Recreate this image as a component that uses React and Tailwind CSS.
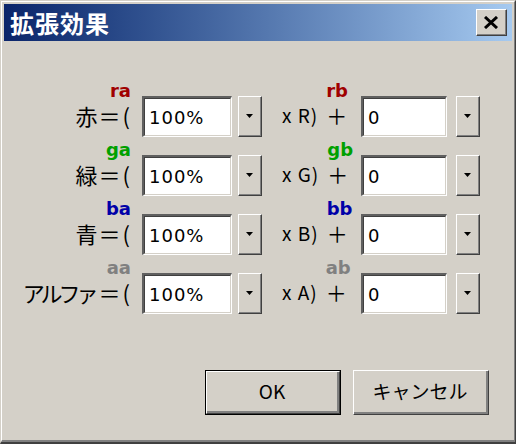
import React from "react";

const rows = [
  { label: "赤", a: "ra", b: "rb", ch: "R", color: "text-[#a00000]", narrow: false },
  { label: "緑", a: "ga", b: "gb", ch: "G", color: "text-[#00a000]", narrow: false },
  { label: "青", a: "ba", b: "bb", ch: "B", color: "text-[#0000a8]", narrow: false },
  { label: "アルファ", a: "aa", b: "ab", ch: "A", color: "text-[#808080]", narrow: true },
];

const Sunken = ({ w, value }) => (
  <div className={`${w} h-[41px] border-t-2 border-l-2 border-t-[#606060] border-l-[#606060] border-b border-r border-b-white border-r-white`}>
    <div className="h-full bg-white border-t border-l border-t-[#404040] border-l-[#404040] border-b border-r border-b-[#d4d0c8] border-r-[#d4d0c8] flex items-center pl-[4px] font-['DejaVu_Sans',sans-serif] text-[18px] tracking-[1px] text-black">
      {value}
    </div>
  </div>
);

const DropBtn = () => (
  <div className="w-[24px] h-[41px] border-t border-l border-t-white border-l-white border-b border-r border-b-[#404040] border-r-[#404040]">
    <div className="h-full border-b border-r border-b-[#808080] border-r-[#808080] bg-[#d4d0c8] flex items-center justify-center">
      <svg width="9" height="5" viewBox="0 0 9 5">
        <path d="M1 0h7l-3.5 4z" fill="#000" />
      </svg>
    </div>
  </div>
);

const Sup = ({ text, color }) => (
  <span className={`block leading-[14px] mb-[4px] text-[18px] font-bold font-['DejaVu_Sans',sans-serif] ${color}`}>{text}</span>
);

function Row({ r }) {
  return (
    <div className="flex h-[41px] font-['Noto_Sans_CJK_JP',sans-serif] text-black">
      <div className="w-[138px] h-full flex flex-col items-end justify-end pr-[10px]">
        <div className="pr-[1px]">
          <Sup text={r.a} color={r.color} />
        </div>
        <span className="flex text-[22px] leading-[26px] mb-[9px] whitespace-nowrap">
          <span className={r.narrow ? "tracking-[-4px] mr-[4px]" : "tracking-[1px]"}>{r.label}</span>
          <span className="tracking-[2px]">＝(</span>
        </span>
      </div>
      <Sunken w="w-[90px]" value="100%" />
      <div className="ml-[6px]">
        <DropBtn />
      </div>
      <div className="w-[99px] h-full flex items-end pl-[20px]">
        <span className="text-[19px] leading-[26px] mb-[9px] whitespace-nowrap tracking-[1px]">x {r.ch})</span>
        <div className="flex flex-col items-start ml-[8px]">
          <Sup text={r.b} color={r.color} />
          <span className="text-[21px] leading-[26px] mb-[9px]">＋</span>
        </div>
      </div>
      <Sunken w="w-[86px]" value="0" />
      <div className="ml-[9px]">
        <DropBtn />
      </div>
    </div>
  );
}

const Button = ({ children, isDefault }) => (
  <div className={`w-[136px] h-[45px] ${isDefault ? "border border-black" : ""}`}>
    <div className="h-full border-t border-l border-t-white border-l-white border-b border-r border-b-[#404040] border-r-[#404040]">
      <div className="h-full border-b-2 border-r-2 border-b-[#808080] border-r-[#808080] bg-[#d4d0c8] flex items-center justify-center font-['Noto_Sans_CJK_JP',sans-serif] text-[19px] text-black">
        {children}
      </div>
    </div>
  </div>
);

export default function App() {
  return (
    <div className="w-[516px] h-[444px] bg-[#d4d0c8] border-t border-l border-t-[#d4d0c8] border-l-[#d4d0c8] border-b-2 border-r border-b-[#404040] border-r-[#404040]">
      <div className="h-full border-t border-l border-t-white border-l-white border-b-2 border-r border-b-[#808080] border-r-[#808080] p-[2px] flex flex-col">
        {/* title bar */}
        <div className="h-[37px] flex items-center justify-between bg-gradient-to-r from-[#0a246a] to-[#a6caf0] pl-[6px] pr-[5px]">
          <span className="text-white font-bold text-[24px] tracking-[1px] font-['Noto_Sans_CJK_JP',sans-serif] leading-none">拡張効果</span>
          <div className="w-[31px] h-[27px] border-t border-l border-t-white border-l-white border-b border-r border-b-[#404040] border-r-[#404040]">
            <div className="h-full bg-[#d4d0c8] border-b border-r border-b-[#808080] border-r-[#808080] flex items-center justify-center">
              <svg width="16" height="13" viewBox="0 0 16 13">
                <path d="M2 1l12 11M14 1L2 12" stroke="#000" strokeWidth="3" />
              </svg>
            </div>
          </div>
        </div>

        {/* rows */}
        <div className="flex flex-col gap-[18px] pt-[55px]">
          {rows.map((r) => (
            <Row key={r.a} r={r} />
          ))}
        </div>

        {/* buttons */}
        <div className="mt-auto flex justify-end gap-[12px] pr-[23px] pb-[23px]">
          <Button isDefault>OK</Button>
          <Button>キャンセル</Button>
        </div>
      </div>
    </div>
  );
}
